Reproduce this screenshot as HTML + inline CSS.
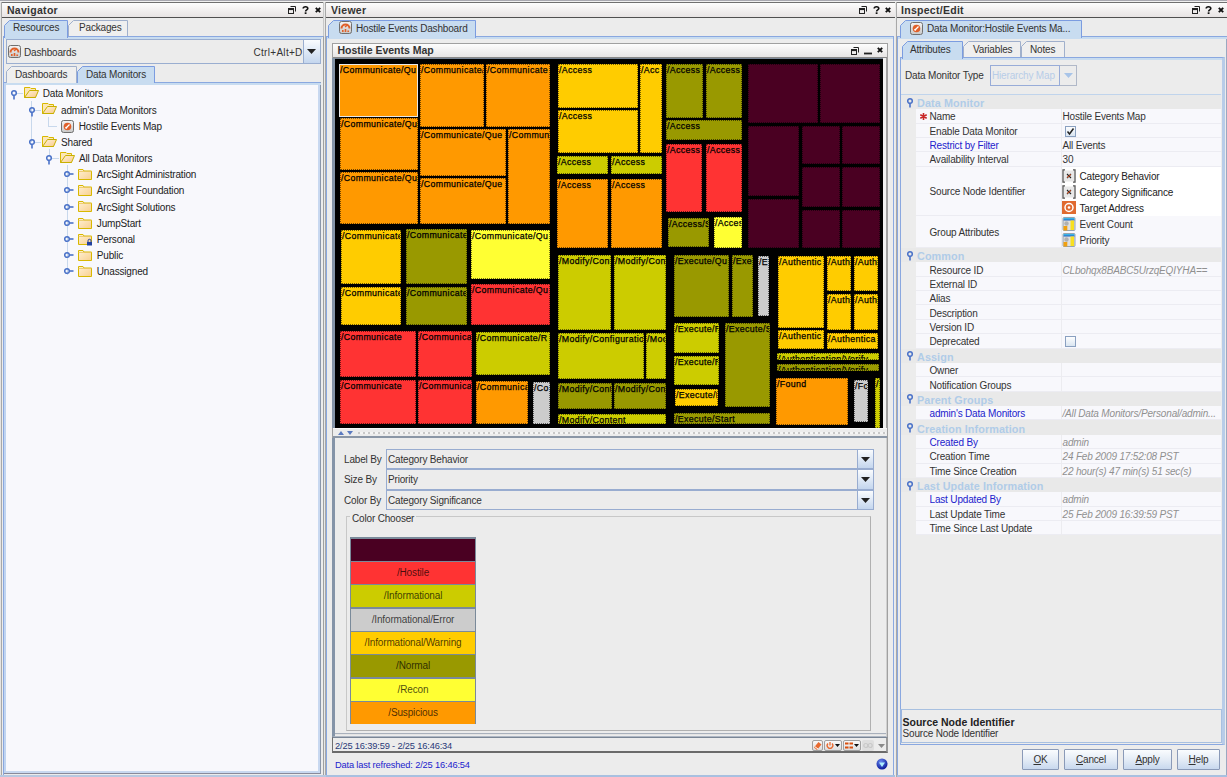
<!DOCTYPE html>
<html><head><meta charset="utf-8"><style>
*{margin:0;padding:0;box-sizing:border-box}
html,body{width:1227px;height:777px;overflow:hidden}
body{position:relative;background:#ececec;font-family:"Liberation Sans",sans-serif;font-size:9.6px;color:#222}
.a{position:absolute}
.t{position:absolute;white-space:nowrap;line-height:12px;font-size:10px;letter-spacing:-0.17px}
.hdr{position:absolute;top:2px;height:16px;background:linear-gradient(#fdfdfd,#f2f0f0 50%,#e8e4e4);border-top:1px solid #707070;border-bottom:1px solid #505050}
.hdr b{position:absolute;left:5px;top:1px;font-size:10.5px;color:#333;line-height:13px;letter-spacing:0.28px}
.tm{position:absolute;left:335px;top:59px;width:548px;height:369px;background:#000;overflow:hidden}
.b{position:absolute;overflow:hidden;white-space:nowrap;font-size:8.8px;line-height:10px;color:#000;letter-spacing:0.35px;padding:0;border:1px dotted rgba(0,0,0,0.55);-webkit-text-stroke:0.25px #000}
.b.sel{border:1px solid #e8e8e8}

</style></head><body>
<div class="a" style="left:0px;top:0px;width:1227px;height:1px;background:#a8a8b0"></div>
<div class="a" style="left:0px;top:1px;width:1227px;height:1px;background:#f0f0f0"></div>
<div class="a" style="left:0px;top:2px;width:2px;height:775px;background:#e4e4e4;border-right:1px solid #a8a8a8"></div>
<div class="hdr" style="left:2px;width:321px"><b>Navigator</b></div>
<div class="hdr" style="left:326px;width:569px"><b>Viewer</b></div>
<div class="hdr" style="left:896px;width:331px"><b>Inspect/Edit</b></div>
<div class="a" style="left:323px;top:2px;width:3px;height:775px;background:#e8e8e8;border-left:1px solid #c8c8c8;border-right:1px solid #a8a8a8"></div>
<div class="a" style="left:895px;top:2px;width:2px;height:775px;background:#e8e8e8;border-right:1px solid #a8a8a8"></div>
<svg class="a" style="left:288px;top:6px" width="8" height="8" viewBox="0 0 8 8"><rect x="0.5" y="2.5" width="5" height="5" fill="none" stroke="#222" stroke-width="1"/><path d="M0.5 3.5H5.5" stroke="#222" stroke-width="1.2"/><path d="M2.5 0.5H7.5V5.5" fill="none" stroke="#222" stroke-width="1"/></svg>
<svg class="a" style="left:302px;top:6px" width="7" height="8" viewBox="0 0 7 8"><path d="M1.2 2.6C1.2 1.2 2.2 0.8 3.5 0.8S5.8 1.4 5.8 2.6C5.8 3.9 3.6 4 3.6 5.4" fill="none" stroke="#111" stroke-width="1.6"/><rect x="2.7" y="6.3" width="1.8" height="1.7" fill="#111"/></svg>
<svg class="a" style="left:315px;top:7px" width="6" height="6" viewBox="0 0 6 6"><path d="M0.8 0.8L5.2 5.2M5.2 0.8L0.8 5.2" stroke="#111" stroke-width="1.9"/></svg>
<svg class="a" style="left:859px;top:6px" width="8" height="8" viewBox="0 0 8 8"><rect x="0.5" y="2.5" width="5" height="5" fill="none" stroke="#222" stroke-width="1"/><path d="M0.5 3.5H5.5" stroke="#222" stroke-width="1.2"/><path d="M2.5 0.5H7.5V5.5" fill="none" stroke="#222" stroke-width="1"/></svg>
<svg class="a" style="left:873px;top:6px" width="7" height="8" viewBox="0 0 7 8"><path d="M1.2 2.6C1.2 1.2 2.2 0.8 3.5 0.8S5.8 1.4 5.8 2.6C5.8 3.9 3.6 4 3.6 5.4" fill="none" stroke="#111" stroke-width="1.6"/><rect x="2.7" y="6.3" width="1.8" height="1.7" fill="#111"/></svg>
<svg class="a" style="left:885px;top:7px" width="6" height="6" viewBox="0 0 6 6"><path d="M0.8 0.8L5.2 5.2M5.2 0.8L0.8 5.2" stroke="#111" stroke-width="1.9"/></svg>
<svg class="a" style="left:1192px;top:6px" width="8" height="8" viewBox="0 0 8 8"><rect x="0.5" y="2.5" width="5" height="5" fill="none" stroke="#222" stroke-width="1"/><path d="M0.5 3.5H5.5" stroke="#222" stroke-width="1.2"/><path d="M2.5 0.5H7.5V5.5" fill="none" stroke="#222" stroke-width="1"/></svg>
<svg class="a" style="left:1205px;top:6px" width="7" height="8" viewBox="0 0 7 8"><path d="M1.2 2.6C1.2 1.2 2.2 0.8 3.5 0.8S5.8 1.4 5.8 2.6C5.8 3.9 3.6 4 3.6 5.4" fill="none" stroke="#111" stroke-width="1.6"/><rect x="2.7" y="6.3" width="1.8" height="1.7" fill="#111"/></svg>
<svg class="a" style="left:1218px;top:7px" width="6" height="6" viewBox="0 0 6 6"><path d="M0.8 0.8L5.2 5.2M5.2 0.8L0.8 5.2" stroke="#111" stroke-width="1.9"/></svg>
<div class="a" style="left:3px;top:36px;width:321px;height:739px;background:#ececec;border:1px solid #8aa8e0;border-right-color:#a0a0a0;border-bottom:none"></div>
<div class="a" style="left:5px;top:37px;width:317px;height:2px;background:#c8dcf0"></div>
<svg class="a" style="left:68px;top:20px" width="60" height="16"><path d="M0.5 16 V5.5 L5.5 0.5 H59.5 V16" fill="#efefef" stroke="#a0b0cc" stroke-width="1"/></svg>

<div class="t" style="left:79px;top:22px;color:#333">Packages</div>
<svg class="a" style="left:4px;top:20px" width="64" height="18"><path d="M0.5 18 V5.5 L5.5 0.5 H63.5 V18" fill="#c8dcf0" stroke="#7b9ce0" stroke-width="1"/></svg>

<div class="t" style="left:13px;top:22px;color:#333">Resources</div>
<div class="a" style="left:6px;top:39px;width:315px;height:25px;background:#ececec;border:1px solid #9aaed0"></div>
<div class="a" style="left:303px;top:40px;width:17px;height:23px;background:linear-gradient(#fafcfe,#c4d6ee);border-left:1px solid #9aaed0"></div>
<svg class="a" style="left:307px;top:49px" width="9" height="5" viewBox="0 0 9 5"><path d="M0 0H9L4.5 5Z" fill="#222"/></svg>
<svg class="a" style="left:8px;top:45px" width="13" height="13" viewBox="0 0 13 13"><defs><linearGradient id="dsg" x1="0" y1="0" x2="0" y2="1"><stop offset="0" stop-color="#f4f4f4"/><stop offset="1" stop-color="#c8c8c8"/></linearGradient></defs><rect x="0.5" y="0.5" width="12" height="12" rx="2" fill="url(#dsg)" stroke="#707070"/><path d="M2.5 7.5A4 4 0 0 1 10.5 7.5" fill="none" stroke="#e0602a" stroke-width="2"/><path d="M6 6L9 3.5" stroke="#e0602a" stroke-width="1.4"/><rect x="3" y="9" width="1.6" height="2" fill="#e0602a"/><rect x="5.7" y="8" width="1.6" height="3" fill="#e0602a"/><rect x="8.4" y="9.5" width="1.6" height="1.5" fill="#e0602a"/></svg>
<div class="t" style="left:24px;top:46.5px;color:#333">Dashboards</div>
<div class="t" style="left:253.5px;top:46.5px;color:#333;letter-spacing:0.3px">Ctrl+Alt+D</div>
<div class="a" style="left:4px;top:82px;width:317px;height:692px;background:#f8f8fc;border-top:1px solid #8aa8e0;border-right:1px solid #8a96aa;border-bottom:1px solid #8a8a9a;box-shadow:inset 2px 0 0 #c0d4f0,inset -2px -2px 0 #c8d8f0"></div>
<svg class="a" style="left:6px;top:66px" width="71" height="17"><path d="M0.5 17 V5.5 L5.5 0.5 H70.5 V17" fill="#efefef" stroke="#a0b0cc" stroke-width="1"/></svg>

<div class="t" style="left:15px;top:69px;color:#333">Dashboards</div>
<svg class="a" style="left:77px;top:66px" width="78" height="18"><path d="M0.5 18 V5.5 L5.5 0.5 H77.5 V18" fill="#c8dcf0" stroke="#7b9ce0" stroke-width="1"/></svg>

<div class="t" style="left:86px;top:69px;color:#333">Data Monitors</div>
<div class="a" style="left:6px;top:83px;width:315px;height:2px;background:#c8dcf0"></div>
<div class="a" style="left:31px;top:101px;width:1px;height:41px;background:#c8d8ec"></div>
<div class="a" style="left:48px;top:117px;width:1px;height:9px;background:#c8d8ec"></div>
<div class="a" style="left:48px;top:126px;width:9px;height:1px;background:#c8d8ec"></div>
<div class="a" style="left:49px;top:149px;width:1px;height:7px;background:#c8d8ec"></div>
<div class="a" style="left:67px;top:165px;width:1px;height:110px;background:#c8d8ec"></div>
<div class="a" style="left:16px;top:93px;width:7px;height:1px;background:#c8d8ec"></div>
<div class="a" style="left:34px;top:110px;width:7px;height:1px;background:#c8d8ec"></div>
<div class="a" style="left:34px;top:142px;width:7px;height:1px;background:#c8d8ec"></div>
<div class="a" style="left:52px;top:158px;width:7px;height:1px;background:#c8d8ec"></div>
<svg class="a" style="left:9.5px;top:89px" width="8" height="11" viewBox="0 0 8 11"><circle cx="4" cy="4" r="2.3" fill="none" stroke="#4a72c8" stroke-width="1.5"/><path d="M4 6.3V10.5" stroke="#4a72c8" stroke-width="1.6"/></svg>
<svg class="a" style="left:24px;top:87px" width="16" height="12" viewBox="0 0 16 12"><defs><linearGradient id="fo" x1="0" y1="0" x2="1" y2="1"><stop offset="0" stop-color="#fff4dc"/><stop offset="1" stop-color="#f8c888"/></linearGradient></defs><path d="M0.5 0.5H6L7 1.5H11.5V10.5H0.5Z" fill="#fce6b8" stroke="#d8b800" stroke-width="1"/><path d="M5.5 3.5H14.5L11.5 10.5H0.5Z" fill="url(#fo)" stroke="#c8b000" stroke-width="1"/></svg>
<div class="t" style="left:42.7px;top:88px;">Data Monitors</div>
<svg class="a" style="left:27.5px;top:105.5px" width="8" height="11" viewBox="0 0 8 11"><circle cx="4" cy="4" r="2.3" fill="none" stroke="#4a72c8" stroke-width="1.5"/><path d="M4 6.3V10.5" stroke="#4a72c8" stroke-width="1.6"/></svg>
<svg class="a" style="left:42px;top:103px" width="16" height="12" viewBox="0 0 16 12"><defs><linearGradient id="fo" x1="0" y1="0" x2="1" y2="1"><stop offset="0" stop-color="#fff4dc"/><stop offset="1" stop-color="#f8c888"/></linearGradient></defs><path d="M0.5 0.5H6L7 1.5H11.5V10.5H0.5Z" fill="#fce6b8" stroke="#d8b800" stroke-width="1"/><path d="M5.5 3.5H14.5L11.5 10.5H0.5Z" fill="url(#fo)" stroke="#c8b000" stroke-width="1"/></svg>
<div class="t" style="left:61px;top:104.5px;">admin's Data Monitors</div>
<svg class="a" style="left:61px;top:119.5px" width="13" height="13" viewBox="0 0 13 13"><defs><linearGradient id="dmg" x1="0" y1="0" x2="0" y2="1"><stop offset="0" stop-color="#f4f4f4"/><stop offset="1" stop-color="#c8c8c8"/></linearGradient></defs><rect x="0.5" y="0.5" width="12" height="12" rx="2" fill="url(#dmg)" stroke="#707070"/><circle cx="6.5" cy="6.5" r="3.8" fill="#e0602a"/><path d="M5 8L8.5 4.5" stroke="#fff" stroke-width="1.3"/><circle cx="5.2" cy="7.8" r="1" fill="#fff"/></svg>
<div class="t" style="left:78.8px;top:121px;">Hostile Events Map</div>
<svg class="a" style="left:27.5px;top:138px" width="8" height="11" viewBox="0 0 8 11"><circle cx="4" cy="4" r="2.3" fill="none" stroke="#4a72c8" stroke-width="1.5"/><path d="M4 6.3V10.5" stroke="#4a72c8" stroke-width="1.6"/></svg>
<svg class="a" style="left:42px;top:136px" width="16" height="12" viewBox="0 0 16 12"><defs><linearGradient id="fo" x1="0" y1="0" x2="1" y2="1"><stop offset="0" stop-color="#fff4dc"/><stop offset="1" stop-color="#f8c888"/></linearGradient></defs><path d="M0.5 0.5H6L7 1.5H11.5V10.5H0.5Z" fill="#fce6b8" stroke="#d8b800" stroke-width="1"/><path d="M5.5 3.5H14.5L11.5 10.5H0.5Z" fill="url(#fo)" stroke="#c8b000" stroke-width="1"/></svg>
<div class="t" style="left:61px;top:137px;">Shared</div>
<svg class="a" style="left:45.3px;top:154px" width="8" height="11" viewBox="0 0 8 11"><circle cx="4" cy="4" r="2.3" fill="none" stroke="#4a72c8" stroke-width="1.5"/><path d="M4 6.3V10.5" stroke="#4a72c8" stroke-width="1.6"/></svg>
<svg class="a" style="left:60px;top:152px" width="16" height="12" viewBox="0 0 16 12"><defs><linearGradient id="fo" x1="0" y1="0" x2="1" y2="1"><stop offset="0" stop-color="#fff4dc"/><stop offset="1" stop-color="#f8c888"/></linearGradient></defs><path d="M0.5 0.5H6L7 1.5H11.5V10.5H0.5Z" fill="#fce6b8" stroke="#d8b800" stroke-width="1"/><path d="M5.5 3.5H14.5L11.5 10.5H0.5Z" fill="url(#fo)" stroke="#c8b000" stroke-width="1"/></svg>
<div class="t" style="left:79px;top:153px;">All Data Monitors</div>
<svg class="a" style="left:63.3px;top:170px" width="11" height="8" viewBox="0 0 11 8"><circle cx="4" cy="4" r="2.3" fill="none" stroke="#4a72c8" stroke-width="1.5"/><path d="M6.3 4H10.5" stroke="#4a72c8" stroke-width="1.6"/></svg>
<svg class="a" style="left:78px;top:168.5px" width="15" height="12" viewBox="0 0 15 12"><defs><linearGradient id="fc" x1="0" y1="0" x2="1" y2="1"><stop offset="0" stop-color="#fff0d4"/><stop offset="1" stop-color="#f8d090"/></linearGradient></defs><path d="M0.5 0.5H5L6 2H13.5V10.5H0.5Z" fill="url(#fc)" stroke="#d8b800" stroke-width="1"/><path d="M0.5 2.5H13.5" stroke="#e8c860" stroke-width="0.8"/></svg>
<div class="t" style="left:96.8px;top:169px;">ArcSight Administration</div>
<svg class="a" style="left:63.3px;top:186px" width="11" height="8" viewBox="0 0 11 8"><circle cx="4" cy="4" r="2.3" fill="none" stroke="#4a72c8" stroke-width="1.5"/><path d="M6.3 4H10.5" stroke="#4a72c8" stroke-width="1.6"/></svg>
<svg class="a" style="left:78px;top:184.5px" width="15" height="12" viewBox="0 0 15 12"><defs><linearGradient id="fc" x1="0" y1="0" x2="1" y2="1"><stop offset="0" stop-color="#fff0d4"/><stop offset="1" stop-color="#f8d090"/></linearGradient></defs><path d="M0.5 0.5H5L6 2H13.5V10.5H0.5Z" fill="url(#fc)" stroke="#d8b800" stroke-width="1"/><path d="M0.5 2.5H13.5" stroke="#e8c860" stroke-width="0.8"/></svg>
<div class="t" style="left:96.8px;top:185px;">ArcSight Foundation</div>
<svg class="a" style="left:63.3px;top:202.5px" width="11" height="8" viewBox="0 0 11 8"><circle cx="4" cy="4" r="2.3" fill="none" stroke="#4a72c8" stroke-width="1.5"/><path d="M6.3 4H10.5" stroke="#4a72c8" stroke-width="1.6"/></svg>
<svg class="a" style="left:78px;top:201.0px" width="15" height="12" viewBox="0 0 15 12"><defs><linearGradient id="fc" x1="0" y1="0" x2="1" y2="1"><stop offset="0" stop-color="#fff0d4"/><stop offset="1" stop-color="#f8d090"/></linearGradient></defs><path d="M0.5 0.5H5L6 2H13.5V10.5H0.5Z" fill="url(#fc)" stroke="#d8b800" stroke-width="1"/><path d="M0.5 2.5H13.5" stroke="#e8c860" stroke-width="0.8"/></svg>
<div class="t" style="left:96.8px;top:201.5px;">ArcSight Solutions</div>
<svg class="a" style="left:63.3px;top:219px" width="11" height="8" viewBox="0 0 11 8"><circle cx="4" cy="4" r="2.3" fill="none" stroke="#4a72c8" stroke-width="1.5"/><path d="M6.3 4H10.5" stroke="#4a72c8" stroke-width="1.6"/></svg>
<svg class="a" style="left:78px;top:217.5px" width="15" height="12" viewBox="0 0 15 12"><defs><linearGradient id="fc" x1="0" y1="0" x2="1" y2="1"><stop offset="0" stop-color="#fff0d4"/><stop offset="1" stop-color="#f8d090"/></linearGradient></defs><path d="M0.5 0.5H5L6 2H13.5V10.5H0.5Z" fill="url(#fc)" stroke="#d8b800" stroke-width="1"/><path d="M0.5 2.5H13.5" stroke="#e8c860" stroke-width="0.8"/></svg>
<div class="t" style="left:96.8px;top:218px;">JumpStart</div>
<svg class="a" style="left:63.3px;top:235px" width="11" height="8" viewBox="0 0 11 8"><circle cx="4" cy="4" r="2.3" fill="none" stroke="#4a72c8" stroke-width="1.5"/><path d="M6.3 4H10.5" stroke="#4a72c8" stroke-width="1.6"/></svg>
<svg class="a" style="left:78px;top:233.5px" width="15" height="12" viewBox="0 0 15 12"><defs><linearGradient id="fc" x1="0" y1="0" x2="1" y2="1"><stop offset="0" stop-color="#fff0d4"/><stop offset="1" stop-color="#f8d090"/></linearGradient></defs><path d="M0.5 0.5H5L6 2H13.5V10.5H0.5Z" fill="url(#fc)" stroke="#d8b800" stroke-width="1"/><path d="M0.5 2.5H13.5" stroke="#e8c860" stroke-width="0.8"/><rect x="9" y="8" width="5" height="3.5" fill="#2040a0"/><path d="M10 8V6.8a1.5 1.5 0 0 1 3 0V8" fill="none" stroke="#2040a0" stroke-width="1"/></svg>
<div class="t" style="left:96.8px;top:234px;">Personal</div>
<svg class="a" style="left:63.3px;top:251px" width="11" height="8" viewBox="0 0 11 8"><circle cx="4" cy="4" r="2.3" fill="none" stroke="#4a72c8" stroke-width="1.5"/><path d="M6.3 4H10.5" stroke="#4a72c8" stroke-width="1.6"/></svg>
<svg class="a" style="left:78px;top:249.5px" width="15" height="12" viewBox="0 0 15 12"><defs><linearGradient id="fc" x1="0" y1="0" x2="1" y2="1"><stop offset="0" stop-color="#fff0d4"/><stop offset="1" stop-color="#f8d090"/></linearGradient></defs><path d="M0.5 0.5H5L6 2H13.5V10.5H0.5Z" fill="url(#fc)" stroke="#d8b800" stroke-width="1"/><path d="M0.5 2.5H13.5" stroke="#e8c860" stroke-width="0.8"/></svg>
<div class="t" style="left:96.8px;top:250px;">Public</div>
<svg class="a" style="left:63.3px;top:267px" width="11" height="8" viewBox="0 0 11 8"><circle cx="4" cy="4" r="2.3" fill="none" stroke="#4a72c8" stroke-width="1.5"/><path d="M6.3 4H10.5" stroke="#4a72c8" stroke-width="1.6"/></svg>
<svg class="a" style="left:78px;top:265.5px" width="15" height="12" viewBox="0 0 15 12"><defs><linearGradient id="fc" x1="0" y1="0" x2="1" y2="1"><stop offset="0" stop-color="#fff0d4"/><stop offset="1" stop-color="#f8d090"/></linearGradient></defs><path d="M0.5 0.5H5L6 2H13.5V10.5H0.5Z" fill="url(#fc)" stroke="#d8b800" stroke-width="1"/><path d="M0.5 2.5H13.5" stroke="#e8c860" stroke-width="0.8"/></svg>
<div class="t" style="left:96.8px;top:266px;">Unassigned</div>
<div class="a" style="left:326px;top:36px;width:568px;height:740px;background:#ececec;border:1px solid #8aa8e0"></div>
<div class="a" style="left:327px;top:37px;width:566px;height:2px;background:#c8dcf0"></div>
<svg class="a" style="left:328px;top:20px" width="148" height="18"><path d="M0.5 18 V5.5 L5.5 0.5 H147.5 V18" fill="#c8dcf0" stroke="#7b9ce0" stroke-width="1"/></svg>
<svg class="a" style="left:339px;top:21px" width="13" height="13" viewBox="0 0 13 13"><defs><linearGradient id="dsg" x1="0" y1="0" x2="0" y2="1"><stop offset="0" stop-color="#f4f4f4"/><stop offset="1" stop-color="#c8c8c8"/></linearGradient></defs><rect x="0.5" y="0.5" width="12" height="12" rx="2" fill="url(#dsg)" stroke="#707070"/><path d="M2.5 7.5A4 4 0 0 1 10.5 7.5" fill="none" stroke="#e0602a" stroke-width="2"/><path d="M6 6L9 3.5" stroke="#e0602a" stroke-width="1.4"/><rect x="3" y="9" width="1.6" height="2" fill="#e0602a"/><rect x="5.7" y="8" width="1.6" height="3" fill="#e0602a"/><rect x="8.4" y="9.5" width="1.6" height="1.5" fill="#e0602a"/></svg>
<div class="t" style="left:356px;top:22.5px;color:#333">Hostile Events Dashboard</div>
<div class="a" style="left:332px;top:43px;width:556px;height:694px;background:#ececec;border:1px solid #a0a0a0"></div>
<div class="a" style="left:333px;top:44px;width:554px;height:14px;background:linear-gradient(#fdfdfd,#e6e4e4);border-bottom:1px solid #888"></div>
<div class="t" style="left:337.5px;top:44px;font-weight:bold;font-size:10.5px;line-height:13px;color:#333;letter-spacing:0px">Hostile Events Map</div>
<svg class="a" style="left:851px;top:47px" width="8" height="8" viewBox="0 0 8 8"><rect x="0.5" y="2.5" width="5" height="5" fill="none" stroke="#222" stroke-width="1"/><path d="M0.5 3.5H5.5" stroke="#222" stroke-width="1.2"/><path d="M2.5 0.5H7.5V5.5" fill="none" stroke="#222" stroke-width="1"/></svg>
<svg class="a" style="left:864px;top:47px" width="8" height="8" viewBox="0 0 8 8"><path d="M0 6.5H8" stroke="#222" stroke-width="1.8"/></svg>
<svg class="a" style="left:877px;top:47px" width="6" height="6" viewBox="0 0 6 6"><path d="M0.8 0.8L5.2 5.2M5.2 0.8L0.8 5.2" stroke="#111" stroke-width="1.9"/></svg>
<div class="a" style="left:333px;top:58px;width:554px;height:1px;background:#7a8696"></div>
<div class="a" style="left:332px;top:58px;width:3px;height:370px;background:#8494a8"></div>
<div class="a" style="left:883px;top:58px;width:4px;height:370px;background:#f0f0f0;border-right:1px solid #a0a0a0"></div>
<div class="tm"><div class="b sel" style="left:4px;top:5px;width:79px;height:53px;background:#FF9900">/Communicate/Qu</div>
<div class="b" style="left:85px;top:5px;width:64px;height:63px;background:#FF9900">/Communicate/Q</div>
<div class="b" style="left:151px;top:5px;width:64px;height:63px;background:#FF9900">/Communicate</div>
<div class="b" style="left:5px;top:59px;width:78px;height:52px;background:#FF9900">/Communicate/Qu</div>
<div class="b" style="left:5px;top:113px;width:78px;height:52px;background:#FF9900">/Communicate/Qu</div>
<div class="b" style="left:85px;top:70px;width:86px;height:47px;background:#FF9900">/Communicate/Que</div>
<div class="b" style="left:85px;top:119px;width:86px;height:46px;background:#FF9900">/Communicate/Que</div>
<div class="b" style="left:173px;top:70px;width:42px;height:95px;background:#FF9900">/Commun</div>
<div class="b" style="left:6px;top:171px;width:60px;height:54px;background:#FFCC00">/Communicate</div>
<div class="b" style="left:6px;top:228px;width:60px;height:38px;background:#FFCC00">/Communicate</div>
<div class="b" style="left:71px;top:170px;width:61px;height:55px;background:#999900">/Communicate</div>
<div class="b" style="left:71px;top:228px;width:61px;height:38px;background:#999900">/Communicate</div>
<div class="b" style="left:136px;top:171px;width:79px;height:49px;background:#FFFF33">/Communicate/Qu</div>
<div class="b" style="left:136px;top:225px;width:79px;height:41px;background:#FF3333">/Communicate/Qu</div>
<div class="b" style="left:5px;top:272px;width:76px;height:46px;background:#FF3333">/Communicate</div>
<div class="b" style="left:83px;top:272px;width:54px;height:46px;background:#FF3333">/Communica</div>
<div class="b" style="left:141px;top:273px;width:74px;height:43px;background:#CCCC00">/Communicate/R</div>
<div class="b" style="left:5px;top:321px;width:76px;height:44px;background:#FF3333">/Communicate</div>
<div class="b" style="left:83px;top:321px;width:54px;height:44px;background:#FF3333">/Communica</div>
<div class="b" style="left:141px;top:322px;width:52px;height:43px;background:#FF9900">/Communica</div>
<div class="b" style="left:198px;top:323px;width:17px;height:42px;background:#CCCCCC">/Co</div>
<div class="b" style="left:223px;top:5px;width:80px;height:44px;background:#FFCC00">/Access</div>
<div class="b" style="left:223px;top:51px;width:80px;height:43px;background:#FFCC00">/Access</div>
<div class="b" style="left:305px;top:5px;width:22px;height:89px;background:#FFCC00">/Acc</div>
<div class="b" style="left:222px;top:97px;width:51px;height:18px;background:#CCCC00">/Access</div>
<div class="b" style="left:276px;top:97px;width:51px;height:18px;background:#CCCC00">/Access</div>
<div class="b" style="left:222px;top:120px;width:51px;height:69px;background:#FF9900">/Access</div>
<div class="b" style="left:276px;top:120px;width:51px;height:69px;background:#FF9900">/Access</div>
<div class="b" style="left:331px;top:5px;width:37px;height:54px;background:#999900">/Access</div>
<div class="b" style="left:371px;top:5px;width:36px;height:54px;background:#999900">/Access</div>
<div class="b" style="left:331px;top:61px;width:76px;height:20px;background:#999900">/Access</div>
<div class="b" style="left:331px;top:85px;width:36px;height:68px;background:#FF3333">/Access</div>
<div class="b" style="left:371px;top:85px;width:36px;height:68px;background:#FF3333">/Access</div>
<div class="b" style="left:333px;top:159px;width:41px;height:29px;background:#999900">/Access/S</div>
<div class="b" style="left:379px;top:158px;width:28px;height:31px;background:#FFFF33">/Acces</div>
<div class="b" style="left:413px;top:5px;width:70px;height:59px;background:#4A0022"></div>
<div class="b" style="left:485px;top:5px;width:60px;height:59px;background:#4A0022"></div>
<div class="b" style="left:413px;top:67px;width:51px;height:70px;background:#4A0022"></div>
<div class="b" style="left:413px;top:140px;width:51px;height:49px;background:#4A0022"></div>
<div class="b" style="left:467px;top:67px;width:38px;height:38px;background:#4A0022"></div>
<div class="b" style="left:507px;top:67px;width:38px;height:38px;background:#4A0022"></div>
<div class="b" style="left:467px;top:108px;width:38px;height:40px;background:#4A0022"></div>
<div class="b" style="left:507px;top:108px;width:38px;height:40px;background:#4A0022"></div>
<div class="b" style="left:467px;top:151px;width:38px;height:38px;background:#4A0022"></div>
<div class="b" style="left:507px;top:151px;width:38px;height:38px;background:#4A0022"></div>
<div class="b" style="left:223px;top:196px;width:53px;height:75px;background:#CCCC00">/Modify/Cont</div>
<div class="b" style="left:279px;top:196px;width:52px;height:75px;background:#CCCC00">/Modify/Cont</div>
<div class="b" style="left:223px;top:274px;width:86px;height:46px;background:#CCCC00">/Modify/Configuratio</div>
<div class="b" style="left:311px;top:274px;width:20px;height:46px;background:#CCCC00">/Moc</div>
<div class="b" style="left:223px;top:324px;width:54px;height:26px;background:#999900">/Modify/Cont</div>
<div class="b" style="left:279px;top:324px;width:52px;height:26px;background:#999900">/Modify/Con</div>
<div class="b" style="left:223px;top:355px;width:108px;height:10px;background:#CCCC00">/Modify/Content</div>
<div class="b" style="left:339px;top:196px;width:55px;height:62px;background:#999900">/Execute/Qu</div>
<div class="b" style="left:397px;top:196px;width:21px;height:62px;background:#999900">/Exec</div>
<div class="b" style="left:423px;top:197px;width:11px;height:60px;background:#CCCCCC">/E</div>
<div class="b" style="left:339px;top:264px;width:45px;height:30px;background:#CCCC00">/Execute/R</div>
<div class="b" style="left:339px;top:297px;width:45px;height:29px;background:#CCCC00">/Execute/R</div>
<div class="b" style="left:340px;top:330px;width:43px;height:17px;background:#FFCC00">/Execute/R</div>
<div class="b" style="left:390px;top:264px;width:45px;height:84px;background:#999900">/Execute/S</div>
<div class="b" style="left:339px;top:354px;width:96px;height:11px;background:#999900">/Execute/Start</div>
<div class="b" style="left:443px;top:197px;width:46px;height:72px;background:#FFCC00">/Authentic</div>
<div class="b" style="left:492px;top:197px;width:24px;height:35px;background:#FFCC00">/Auth</div>
<div class="b" style="left:519px;top:197px;width:24px;height:35px;background:#FFCC00">/Auth</div>
<div class="b" style="left:492px;top:235px;width:24px;height:36px;background:#FFCC00">/Auth</div>
<div class="b" style="left:519px;top:235px;width:24px;height:36px;background:#FFCC00">/Auth</div>
<div class="b" style="left:443px;top:271px;width:46px;height:19px;background:#FFCC00">/Authentic</div>
<div class="b" style="left:492px;top:274px;width:51px;height:16px;background:#FFCC00">/Authentica</div>
<div class="b" style="left:442px;top:294px;width:102px;height:7px;background:#CCCC00">/Authentication/Verify</div>
<div class="b" style="left:442px;top:305px;width:102px;height:7px;background:#999900">/Authentication/Verify</div>
<div class="b" style="left:441px;top:319px;width:72px;height:47px;background:#FF9900">/Found</div>
<div class="b" style="left:519px;top:321px;width:14px;height:42px;background:#CCCCCC">/Fo</div>
<div class="b" style="left:540px;top:319px;width:5px;height:50px;background:#CCCC00">/</div></div>
<div class="a" style="left:333px;top:428px;width:554px;height:10px;background:#ececec;border-top:1px solid #f8f8f8;border-bottom:2px solid #8a96a6"></div>
<div class="a" style="left:358px;top:432px;width:528px;height:2px;background:repeating-linear-gradient(90deg,#c8c8c8 0 2px,#f4f4f4 2px 5px)"></div>
<svg class="a" style="left:338px;top:430px" width="18" height="6" viewBox="0 0 18 6"><path d="M0 5H6L3 1Z" fill="#5a7ac0"/><path d="M9 1H15L12 5Z" fill="#5a7ac0"/></svg>
<div class="a" style="left:332px;top:438px;width:555px;height:299px;background:#ececec;border-left:3px solid #8494a8;border-bottom:1px solid #b0b8c4;border-right:1px solid #d0d0d0"></div>
<div class="a" style="left:335px;top:733px;width:551px;height:2px;background:#e4e4e4;border-top:1px solid #a8b0bc"></div>
<div class="t" style="left:344px;top:453.5px;color:#333">Label By</div>
<div class="a" style="left:386px;top:449px;width:488px;height:20px;background:#ececec;border:1px solid #98acd0"></div>
<div class="a" style="left:857px;top:450px;width:16px;height:18px;background:linear-gradient(#fafcfe,#c4d6ee);border-left:1px solid #98acd0"></div>
<svg class="a" style="left:861px;top:456.5px" width="9" height="5" viewBox="0 0 9 5"><path d="M0 0H9L4.5 5Z" fill="#222"/></svg>
<div class="t" style="left:388px;top:453.5px;color:#333">Category Behavior</div>
<div class="t" style="left:344px;top:474.0px;color:#333">Size By</div>
<div class="a" style="left:386px;top:469px;width:488px;height:21px;background:#ececec;border:1px solid #98acd0"></div>
<div class="a" style="left:857px;top:470px;width:16px;height:19px;background:linear-gradient(#fafcfe,#c4d6ee);border-left:1px solid #98acd0"></div>
<svg class="a" style="left:861px;top:477.0px" width="9" height="5" viewBox="0 0 9 5"><path d="M0 0H9L4.5 5Z" fill="#222"/></svg>
<div class="t" style="left:388px;top:474.0px;color:#333">Priority</div>
<div class="t" style="left:344px;top:494.5px;color:#333">Color By</div>
<div class="a" style="left:386px;top:490px;width:488px;height:20px;background:#ececec;border:1px solid #98acd0"></div>
<div class="a" style="left:857px;top:491px;width:16px;height:18px;background:linear-gradient(#fafcfe,#c4d6ee);border-left:1px solid #98acd0"></div>
<svg class="a" style="left:861px;top:497.5px" width="9" height="5" viewBox="0 0 9 5"><path d="M0 0H9L4.5 5Z" fill="#222"/></svg>
<div class="t" style="left:388px;top:494.5px;color:#333">Category Significance</div>
<div class="a" style="left:346px;top:516px;width:525px;height:215px;border:1px solid #c8c8c8;border-right-color:#b0b0b0;border-bottom-color:#b0b0b0"></div>
<div class="t" style="left:350px;top:512.5px;padding:0 2px;background:#ececec;color:#333">Color Chooser</div>
<div class="a" style="left:350px;top:537px;width:126px;height:187px;background:#7a8a9a"></div>
<div class="a" style="left:351px;top:539px;width:124px;height:22px;background:#4A0022;text-align:center;line-height:22px;color:rgba(0,0,0,0.72);font-size:10px;letter-spacing:-0.15px"></div>
<div class="a" style="left:351px;top:562px;width:124px;height:22px;background:#FF3333;text-align:center;line-height:22px;color:rgba(0,0,0,0.72);font-size:10px;letter-spacing:-0.15px">/Hostile</div>
<div class="a" style="left:351px;top:585px;width:124px;height:22px;background:#CCCC00;text-align:center;line-height:22px;color:rgba(0,0,0,0.72);font-size:10px;letter-spacing:-0.15px">/Informational</div>
<div class="a" style="left:351px;top:609px;width:124px;height:22px;background:#CCCCCC;text-align:center;line-height:22px;color:rgba(0,0,0,0.72);font-size:10px;letter-spacing:-0.15px">/Informational/Error</div>
<div class="a" style="left:351px;top:632px;width:124px;height:22px;background:#FFCC00;text-align:center;line-height:22px;color:rgba(0,0,0,0.72);font-size:10px;letter-spacing:-0.15px">/Informational/Warning</div>
<div class="a" style="left:351px;top:655px;width:124px;height:22px;background:#999900;text-align:center;line-height:22px;color:rgba(0,0,0,0.72);font-size:10px;letter-spacing:-0.15px">/Normal</div>
<div class="a" style="left:351px;top:679px;width:124px;height:22px;background:#FFFF33;text-align:center;line-height:22px;color:rgba(0,0,0,0.72);font-size:10px;letter-spacing:-0.15px">/Recon</div>
<div class="a" style="left:351px;top:702px;width:124px;height:22px;background:#FF9900;text-align:center;line-height:22px;color:rgba(0,0,0,0.72);font-size:10px;letter-spacing:-0.15px">/Suspicious</div>
<div class="a" style="left:332px;top:737px;width:556px;height:16px;background:#ececec;border-top:1px solid #7a8696;border-left:1px solid #707070;border-bottom:2px solid #6a6a6a;border-right:2px solid #9a9a9a"></div>
<div class="t" style="left:335px;top:739.5px;color:#2a3a78;font-size:9.3px">2/25 16:39:59 - 2/25 16:46:34</div>
<div class="t" style="left:335px;top:758.5px;color:#2222cc;font-size:9.3px">Data last refreshed: 2/25 16:46:54</div>
<svg class="a" style="left:812px;top:740px" width="11" height="11" viewBox="0 0 11 11"><defs><linearGradient id="tbg" x1="0" y1="0" x2="0" y2="1"><stop offset="0" stop-color="#fafafa"/><stop offset="1" stop-color="#dcdcdc"/></linearGradient></defs><rect x="0.5" y="0.5" width="10" height="10" rx="1.5" fill="url(#tbg)" stroke="#a0a0a0"/><path d="M2 7.5L6.5 2L9.5 4.5L5 10Z" fill="#e86a30"/><path d="M3 6.8L6 9" stroke="#fff" stroke-width="1"/></svg>
<svg class="a" style="left:824px;top:740px" width="18" height="11" viewBox="0 0 18 11"><defs><linearGradient id="tbg" x1="0" y1="0" x2="0" y2="1"><stop offset="0" stop-color="#fafafa"/><stop offset="1" stop-color="#dcdcdc"/></linearGradient></defs><rect x="0.5" y="0.5" width="17" height="10" rx="1.5" fill="url(#tbg)" stroke="#a0a0a0"/><path d="M4 3.5A2.8 2.8 0 1 0 8 3.5" fill="none" stroke="#e86a30" stroke-width="1.3"/><path d="M6 2V5.5" stroke="#e86a30" stroke-width="1.3"/><path d="M11 4H16L13.5 7Z" fill="#111"/></svg>
<svg class="a" style="left:843px;top:740px" width="18" height="11" viewBox="0 0 18 11"><defs><linearGradient id="tbg" x1="0" y1="0" x2="0" y2="1"><stop offset="0" stop-color="#fafafa"/><stop offset="1" stop-color="#dcdcdc"/></linearGradient></defs><rect x="0.5" y="0.5" width="17" height="10" rx="1.5" fill="url(#tbg)" stroke="#a0a0a0"/><rect x="2" y="2.5" width="3.5" height="2" fill="#d85010"/><rect x="6.5" y="2.5" width="3.5" height="2" fill="#d85010"/><rect x="2" y="6.5" width="3.5" height="2" fill="#d85010"/><rect x="6.5" y="6.5" width="3.5" height="2" fill="#d85010"/><path d="M11 4H16L13.5 7Z" fill="#111"/></svg>
<svg class="a" style="left:862px;top:740px" width="12" height="11" viewBox="0 0 12 11"><rect x="0" y="0" width="12" height="11" rx="2" fill="#dedede"/><circle cx="3.8" cy="5.5" r="2" fill="none" stroke="#c8c8c8" stroke-width="1.2"/><circle cx="8.2" cy="5.5" r="2" fill="none" stroke="#c8c8c8" stroke-width="1.2"/></svg>
<svg class="a" style="left:878px;top:744px" width="7" height="4" viewBox="0 0 7 4"><path d="M0 0H7L3.5 4Z" fill="#8a8a8a"/></svg>
<svg class="a" style="left:876px;top:758px" width="12" height="12" viewBox="0 0 12 12"><defs><radialGradient id="bc" cx="0.4" cy="0.3" r="0.7"><stop offset="0" stop-color="#6a8af0"/><stop offset="1" stop-color="#0a1a9a"/></radialGradient></defs><circle cx="6" cy="6" r="5.5" fill="url(#bc)"/><path d="M3 4.5H9L6 9Z" fill="#aef0ff"/></svg>
<div class="a" style="left:897px;top:36px;width:330px;height:740px;background:#ececec;border:1px solid #8aa8e0;border-right:1px solid #9aa8c0"></div>
<div class="a" style="left:898px;top:37px;width:329px;height:2px;background:#c8dcf0"></div>
<svg class="a" style="left:900px;top:20px" width="182" height="18"><path d="M0.5 18 V5.5 L5.5 0.5 H181.5 V18" fill="#c8dcf0" stroke="#7b9ce0" stroke-width="1"/></svg>
<svg class="a" style="left:910px;top:22px" width="13" height="13" viewBox="0 0 13 13"><defs><linearGradient id="dmg" x1="0" y1="0" x2="0" y2="1"><stop offset="0" stop-color="#f4f4f4"/><stop offset="1" stop-color="#c8c8c8"/></linearGradient></defs><rect x="0.5" y="0.5" width="12" height="12" rx="2" fill="url(#dmg)" stroke="#707070"/><circle cx="6.5" cy="6.5" r="3.8" fill="#e0602a"/><path d="M5 8L8.5 4.5" stroke="#fff" stroke-width="1.3"/><circle cx="5.2" cy="7.8" r="1" fill="#fff"/></svg>
<div class="t" style="left:927px;top:22.5px;color:#333">Data Monitor:Hostile Events Ma...</div>
<div class="a" style="left:900px;top:57px;width:325px;height:688px;background:#ececec;border:1px solid #8aa8e0;border-right:3px solid #b8cce8"></div>
<div class="a" style="left:901px;top:58px;width:321px;height:2px;background:#c8dcf0"></div>
<svg class="a" style="left:1021px;top:41px" width="44" height="16"><path d="M0.5 16 V5.5 L5.5 0.5 H43.5 V16" fill="#efefef" stroke="#a0b0cc" stroke-width="1"/></svg>

<div class="t" style="left:1030px;top:43.5px;color:#333">Notes</div>
<svg class="a" style="left:963px;top:41px" width="58" height="16"><path d="M0.5 16 V5.5 L5.5 0.5 H57.5 V16" fill="#efefef" stroke="#a0b0cc" stroke-width="1"/></svg>

<div class="t" style="left:973px;top:43.5px;color:#333">Variables</div>
<svg class="a" style="left:902px;top:41px" width="61" height="18"><path d="M0.5 18 V5.5 L5.5 0.5 H60.5 V18" fill="#c8dcf0" stroke="#7b9ce0" stroke-width="1"/></svg>

<div class="t" style="left:910px;top:43.5px;color:#333">Attributes</div>
<div class="t" style="left:905px;top:70px;color:#333">Data Monitor Type</div>
<div class="a" style="left:990px;top:65px;width:87px;height:21px;background:#ececec;border:1px solid #b0b8c8"></div>
<div class="a" style="left:990px;top:65px;width:70px;height:21px;border:1px solid #98acd8"></div>
<div class="t" style="left:992px;top:69.7px;color:#b8cce8">Hierarchy Map</div>
<svg class="a" style="left:1064px;top:73px" width="9" height="5" viewBox="0 0 9 5"><path d="M0 0H9L4.5 5Z" fill="#a8c4e8"/></svg>
<div class="a" style="left:901px;top:94px;width:320px;height:443px;background:#ececec;border-top:1px solid #c0d4ec"></div>
<div class="a" style="left:901px;top:95px;width:320px;height:14px;background:#e9e9e9"></div>
<svg class="a" style="left:905.5px;top:96.55px" width="8" height="11" viewBox="0 0 8 11"><circle cx="4" cy="4" r="2.3" fill="none" stroke="#4a72c8" stroke-width="1.5"/><path d="M4 6.3V10.5" stroke="#4a72c8" stroke-width="1.6"/></svg>
<div class="t" style="left:917px;top:97.05px;color:#b0cce8;font-weight:bold;font-size:10.8px;letter-spacing:0.1px">Data Monitor</div>
<div class="a" style="left:916px;top:109px;width:305px;height:15px;background:#f8f8fc;border-bottom:1px solid #ececf2"></div>
<div class="a" style="left:1061px;top:109px;width:1px;height:15px;background:#ececf0"></div>
<div class="t" style="left:929.5px;top:111.3px;color:#333">Name</div>
<div class="t" style="left:1062.5px;top:111.3px;color:#333;">Hostile Events Map</div>
<div class="a" style="left:916px;top:124px;width:305px;height:14px;background:#f8f8fc;border-bottom:1px solid #ececf2"></div>
<div class="a" style="left:1061px;top:124px;width:1px;height:14px;background:#ececf0"></div>
<div class="t" style="left:929.5px;top:125.69999999999999px;color:#333">Enable Data Monitor</div>
<svg class="a" style="left:1065px;top:125.69999999999999px" width="11" height="11" viewBox="0 0 11 11"><defs><linearGradient id="cg" x1="0" y1="0" x2="0" y2="1"><stop offset="0" stop-color="#fff"/><stop offset="1" stop-color="#d8e4f0"/></linearGradient></defs><rect x="0.5" y="0.5" width="10" height="10" fill="url(#cg)" stroke="#8aa0c0"/><path d="M2.5 5.5L4.5 8L8.5 2.5" fill="none" stroke="#222" stroke-width="1.5"/></svg>
<div class="a" style="left:916px;top:138px;width:305px;height:14px;background:#f8f8fc;border-bottom:1px solid #ececf2"></div>
<div class="a" style="left:1061px;top:138px;width:1px;height:14px;background:#ececf0"></div>
<div class="t" style="left:929.5px;top:140.05px;color:#2222cc">Restrict by Filter</div>
<div class="t" style="left:1062.5px;top:140.05px;color:#333;">All Events</div>
<div class="a" style="left:916px;top:152px;width:305px;height:15px;background:#f8f8fc;border-bottom:1px solid #ececf2"></div>
<div class="a" style="left:1061px;top:152px;width:1px;height:15px;background:#ececf0"></div>
<div class="t" style="left:929.5px;top:154.39999999999998px;color:#333">Availability Interval</div>
<div class="t" style="left:1062.5px;top:154.39999999999998px;color:#333;">30</div>
<div class="a" style="left:916px;top:167px;width:305px;height:49px;background:#f8f8fc;border-bottom:1px solid #ececf2"></div>
<div class="a" style="left:1061px;top:167px;width:1px;height:49px;background:#ececf0"></div>
<div class="t" style="left:929.5px;top:186.05px;color:#333">Source Node Identifier</div>
<div class="a" style="left:1062px;top:167px;width:159px;height:49px;background:#fff"></div>
<svg class="a" style="left:1062px;top:169px" width="14" height="14" viewBox="0 0 14 14"><rect x="2" y="1.5" width="10" height="11" fill="#e8e8e8"/><path d="M3 0.8H1V13.2H3M11 0.8H13V13.2H11" fill="none" stroke="#555" stroke-width="1.3"/><path d="M5 5L9 9M9 5L5 9" stroke="#222" stroke-width="1.1"/><path d="M5 8.5L9 5.5" stroke="#e05020" stroke-width="1"/></svg>
<div class="t" style="left:1079.5px;top:171px;color:#222">Category Behavior</div>
<svg class="a" style="left:1062px;top:185px" width="14" height="14" viewBox="0 0 14 14"><rect x="2" y="1.5" width="10" height="11" fill="#e8e8e8"/><path d="M3 0.8H1V13.2H3M11 0.8H13V13.2H11" fill="none" stroke="#555" stroke-width="1.3"/><path d="M5 5L9 9M9 5L5 9" stroke="#222" stroke-width="1.1"/><path d="M5 8.5L9 5.5" stroke="#e05020" stroke-width="1"/></svg>
<div class="t" style="left:1079.5px;top:187px;color:#222">Category Significance</div>
<svg class="a" style="left:1062px;top:201px" width="14" height="13" viewBox="0 0 14 13"><rect x="0" y="0" width="14" height="13" fill="#e06a30"/><circle cx="7" cy="6.5" r="4" fill="none" stroke="#fff" stroke-width="1.5"/><circle cx="7" cy="6.5" r="1.3" fill="#fff"/></svg>
<div class="t" style="left:1079.5px;top:203px;color:#222">Target Address</div>
<div class="a" style="left:916px;top:216px;width:305px;height:32px;background:#f8f8fc;border-bottom:1px solid #ececf2"></div>
<div class="a" style="left:1061px;top:216px;width:1px;height:32px;background:#ececf0"></div>
<div class="t" style="left:929.5px;top:226.75px;color:#333">Group Attributes</div>
<svg class="a" style="left:1062px;top:217px" width="14" height="14" viewBox="0 0 14 14"><defs><linearGradient id="gb" x1="0" y1="0" x2="0" y2="1"><stop offset="0" stop-color="#40c8f0"/><stop offset="1" stop-color="#2060c0"/></linearGradient></defs><rect x="1" y="0.5" width="12" height="13" rx="1" fill="#e0e0e0" stroke="#8090a0" stroke-width="0.8"/><rect x="1.5" y="1" width="11" height="2.5" fill="url(#gb)"/><rect x="8.5" y="3.5" width="3.5" height="9.5" fill="#f8e020"/><circle cx="4.5" cy="6.5" r="2.2" fill="#b0b0b0"/><rect x="1.5" y="9" width="3.8" height="4.5" fill="#f0a010"/></svg>
<div class="t" style="left:1079.5px;top:219px;color:#333">Event Count</div>
<svg class="a" style="left:1062px;top:233px" width="14" height="14" viewBox="0 0 14 14"><defs><linearGradient id="gb" x1="0" y1="0" x2="0" y2="1"><stop offset="0" stop-color="#40c8f0"/><stop offset="1" stop-color="#2060c0"/></linearGradient></defs><rect x="1" y="0.5" width="12" height="13" rx="1" fill="#e0e0e0" stroke="#8090a0" stroke-width="0.8"/><rect x="1.5" y="1" width="11" height="2.5" fill="url(#gb)"/><rect x="8.5" y="3.5" width="3.5" height="9.5" fill="#f8e020"/><circle cx="4.5" cy="6.5" r="2.2" fill="#b0b0b0"/><rect x="1.5" y="9" width="3.8" height="4.5" fill="#f0a010"/></svg>
<div class="t" style="left:1079.5px;top:235.3px;color:#333">Priority</div>
<div class="a" style="left:901px;top:248px;width:320px;height:14px;background:#e9e9e9"></div>
<svg class="a" style="left:905.5px;top:249.685px" width="8" height="11" viewBox="0 0 8 11"><circle cx="4" cy="4" r="2.3" fill="none" stroke="#4a72c8" stroke-width="1.5"/><path d="M4 6.3V10.5" stroke="#4a72c8" stroke-width="1.6"/></svg>
<div class="t" style="left:917px;top:250.185px;color:#b0cce8;font-weight:bold;font-size:10.8px;letter-spacing:0.1px">Common</div>
<div class="a" style="left:916px;top:262px;width:305px;height:15px;background:#f8f8fc;border-bottom:1px solid #ececf2"></div>
<div class="a" style="left:1061px;top:262px;width:1px;height:15px;background:#ececf0"></div>
<div class="t" style="left:929.5px;top:264.555px;color:#333">Resource ID</div>
<div class="t" style="left:1062.5px;top:264.555px;color:#333;font-style:italic;color:#909090">CLbohqx8BABC5UrzqEQIYHA==</div>
<div class="a" style="left:916px;top:277px;width:305px;height:14px;background:#f8f8fc;border-bottom:1px solid #ececf2"></div>
<div class="a" style="left:1061px;top:277px;width:1px;height:14px;background:#ececf0"></div>
<div class="t" style="left:929.5px;top:278.925px;color:#333">External ID</div>
<div class="a" style="left:916px;top:291px;width:305px;height:14px;background:#f8f8fc;border-bottom:1px solid #ececf2"></div>
<div class="a" style="left:1061px;top:291px;width:1px;height:14px;background:#ececf0"></div>
<div class="t" style="left:929.5px;top:293.295px;color:#333">Alias</div>
<div class="a" style="left:916px;top:305px;width:305px;height:15px;background:#f8f8fc;border-bottom:1px solid #ececf2"></div>
<div class="a" style="left:1061px;top:305px;width:1px;height:15px;background:#ececf0"></div>
<div class="t" style="left:929.5px;top:307.665px;color:#333">Description</div>
<div class="a" style="left:916px;top:320px;width:305px;height:14px;background:#f8f8fc;border-bottom:1px solid #ececf2"></div>
<div class="a" style="left:1061px;top:320px;width:1px;height:14px;background:#ececf0"></div>
<div class="t" style="left:929.5px;top:322.035px;color:#333">Version ID</div>
<div class="a" style="left:916px;top:334px;width:305px;height:15px;background:#f8f8fc;border-bottom:1px solid #ececf2"></div>
<div class="a" style="left:1061px;top:334px;width:1px;height:15px;background:#ececf0"></div>
<div class="t" style="left:929.5px;top:336.40500000000003px;color:#333">Deprecated</div>
<svg class="a" style="left:1065px;top:336.40500000000003px" width="11" height="11" viewBox="0 0 11 11"><defs><linearGradient id="cg" x1="0" y1="0" x2="0" y2="1"><stop offset="0" stop-color="#fff"/><stop offset="1" stop-color="#d8e4f0"/></linearGradient></defs><rect x="0.5" y="0.5" width="10" height="10" fill="url(#cg)" stroke="#8aa0c0"/></svg>
<div class="a" style="left:901px;top:349px;width:320px;height:14px;background:#e9e9e9"></div>
<svg class="a" style="left:905.5px;top:350.27500000000003px" width="8" height="11" viewBox="0 0 8 11"><circle cx="4" cy="4" r="2.3" fill="none" stroke="#4a72c8" stroke-width="1.5"/><path d="M4 6.3V10.5" stroke="#4a72c8" stroke-width="1.6"/></svg>
<div class="t" style="left:917px;top:350.77500000000003px;color:#b0cce8;font-weight:bold;font-size:10.8px;letter-spacing:0.1px">Assign</div>
<div class="a" style="left:916px;top:363px;width:305px;height:14px;background:#f8f8fc;border-bottom:1px solid #ececf2"></div>
<div class="a" style="left:1061px;top:363px;width:1px;height:14px;background:#ececf0"></div>
<div class="t" style="left:929.5px;top:365.14500000000004px;color:#333">Owner</div>
<div class="a" style="left:916px;top:377px;width:305px;height:15px;background:#f8f8fc;border-bottom:1px solid #ececf2"></div>
<div class="a" style="left:1061px;top:377px;width:1px;height:15px;background:#ececf0"></div>
<div class="t" style="left:929.5px;top:379.51500000000004px;color:#333">Notification Groups</div>
<div class="a" style="left:901px;top:392px;width:320px;height:14px;background:#e9e9e9"></div>
<svg class="a" style="left:905.5px;top:393.38500000000005px" width="8" height="11" viewBox="0 0 8 11"><circle cx="4" cy="4" r="2.3" fill="none" stroke="#4a72c8" stroke-width="1.5"/><path d="M4 6.3V10.5" stroke="#4a72c8" stroke-width="1.6"/></svg>
<div class="t" style="left:917px;top:393.88500000000005px;color:#b0cce8;font-weight:bold;font-size:10.8px;letter-spacing:0.1px">Parent Groups</div>
<div class="a" style="left:916px;top:406px;width:305px;height:14px;background:#f8f8fc;border-bottom:1px solid #ececf2"></div>
<div class="a" style="left:1061px;top:406px;width:1px;height:14px;background:#ececf0"></div>
<div class="t" style="left:929.5px;top:408.25500000000005px;color:#2222cc">admin's Data Monitors</div>
<div class="t" style="left:1062.5px;top:408.25500000000005px;color:#333;font-style:italic;color:#909090">/All Data Monitors/Personal/admin...</div>
<div class="a" style="left:901px;top:420px;width:320px;height:15px;background:#e9e9e9"></div>
<svg class="a" style="left:905.5px;top:422.12500000000006px" width="8" height="11" viewBox="0 0 8 11"><circle cx="4" cy="4" r="2.3" fill="none" stroke="#4a72c8" stroke-width="1.5"/><path d="M4 6.3V10.5" stroke="#4a72c8" stroke-width="1.6"/></svg>
<div class="t" style="left:917px;top:422.62500000000006px;color:#b0cce8;font-weight:bold;font-size:10.8px;letter-spacing:0.1px">Creation Information</div>
<div class="a" style="left:916px;top:435px;width:305px;height:14px;background:#f8f8fc;border-bottom:1px solid #ececf2"></div>
<div class="a" style="left:1061px;top:435px;width:1px;height:14px;background:#ececf0"></div>
<div class="t" style="left:929.5px;top:436.99500000000006px;color:#2222cc">Created By</div>
<div class="t" style="left:1062.5px;top:436.99500000000006px;color:#333;font-style:italic;color:#909090">admin</div>
<div class="a" style="left:916px;top:449px;width:305px;height:15px;background:#f8f8fc;border-bottom:1px solid #ececf2"></div>
<div class="a" style="left:1061px;top:449px;width:1px;height:15px;background:#ececf0"></div>
<div class="t" style="left:929.5px;top:451.36500000000007px;color:#333">Creation Time</div>
<div class="t" style="left:1062.5px;top:451.36500000000007px;color:#333;font-style:italic;color:#909090">24 Feb 2009 17:52:08 PST</div>
<div class="a" style="left:916px;top:464px;width:305px;height:14px;background:#f8f8fc;border-bottom:1px solid #ececf2"></div>
<div class="a" style="left:1061px;top:464px;width:1px;height:14px;background:#ececf0"></div>
<div class="t" style="left:929.5px;top:465.73500000000007px;color:#333">Time Since Creation</div>
<div class="t" style="left:1062.5px;top:465.73500000000007px;color:#333;font-style:italic;color:#909090">22 hour(s) 47 min(s) 51 sec(s)</div>
<div class="a" style="left:901px;top:478px;width:320px;height:14px;background:#e9e9e9"></div>
<svg class="a" style="left:905.5px;top:479.6050000000001px" width="8" height="11" viewBox="0 0 8 11"><circle cx="4" cy="4" r="2.3" fill="none" stroke="#4a72c8" stroke-width="1.5"/><path d="M4 6.3V10.5" stroke="#4a72c8" stroke-width="1.6"/></svg>
<div class="t" style="left:917px;top:480.1050000000001px;color:#b0cce8;font-weight:bold;font-size:10.8px;letter-spacing:0.1px">Last Update Information</div>
<div class="a" style="left:916px;top:492px;width:305px;height:15px;background:#f8f8fc;border-bottom:1px solid #ececf2"></div>
<div class="a" style="left:1061px;top:492px;width:1px;height:15px;background:#ececf0"></div>
<div class="t" style="left:929.5px;top:494.4750000000001px;color:#2222cc">Last Updated By</div>
<div class="t" style="left:1062.5px;top:494.4750000000001px;color:#333;font-style:italic;color:#909090">admin</div>
<div class="a" style="left:916px;top:507px;width:305px;height:14px;background:#f8f8fc;border-bottom:1px solid #ececf2"></div>
<div class="a" style="left:1061px;top:507px;width:1px;height:14px;background:#ececf0"></div>
<div class="t" style="left:929.5px;top:508.845px;color:#333">Last Update Time</div>
<div class="t" style="left:1062.5px;top:508.845px;color:#333;font-style:italic;color:#909090">25 Feb 2009 16:39:59 PST</div>
<div class="a" style="left:916px;top:521px;width:305px;height:14px;background:#f8f8fc;border-bottom:1px solid #ececf2"></div>
<div class="a" style="left:1061px;top:521px;width:1px;height:14px;background:#ececf0"></div>
<div class="t" style="left:929.5px;top:523.2150000000001px;color:#333">Time Since Last Update</div>
<svg class="a" style="left:920px;top:113px" width="7" height="7" viewBox="0 0 7 7"><path d="M3.5 0V7M0.3 1.7L6.7 5.3M6.7 1.7L0.3 5.3" stroke="#c82828" stroke-width="1.6"/></svg>
<div class="a" style="left:900px;top:709px;width:322px;height:34px;background:#ececec;border:1px solid #a8c0e0;border-left:2px solid #98b4e0"></div>
<div class="t" style="left:902.5px;top:715.5px;font-weight:bold;color:#222;font-size:10.5px;letter-spacing:0">Source Node Identifier</div>
<div class="t" style="left:902.5px;top:728.3px;color:#333">Source Node Identifier</div>
<div class="a" style="left:1022px;top:749px;width:37px;height:21px;background:linear-gradient(#fafcfe,#e4ecf6 50%,#c8d8ee);border:1px solid #8a9ab8;border-radius:1px"></div>
<div class="t" style="left:1022px;top:754px;width:37px;text-align:center;color:#333"><u>O</u>K</div>
<div class="a" style="left:1064px;top:749px;width:54px;height:21px;background:linear-gradient(#fafcfe,#e4ecf6 50%,#c8d8ee);border:1px solid #8a9ab8;border-radius:1px"></div>
<div class="t" style="left:1064px;top:754px;width:54px;text-align:center;color:#333"><u>C</u>ancel</div>
<div class="a" style="left:1123px;top:749px;width:49px;height:21px;background:linear-gradient(#fafcfe,#e4ecf6 50%,#c8d8ee);border:1px solid #8a9ab8;border-radius:1px"></div>
<div class="t" style="left:1123px;top:754px;width:49px;text-align:center;color:#333"><u>A</u>pply</div>
<div class="a" style="left:1177px;top:749px;width:43px;height:21px;background:linear-gradient(#fafcfe,#e4ecf6 50%,#c8d8ee);border:1px solid #8a9ab8;border-radius:1px"></div>
<div class="t" style="left:1177px;top:754px;width:43px;text-align:center;color:#333"><u>H</u>elp</div>
<div class="a" style="left:897px;top:775px;width:330px;height:2px;background:#a8c0e0"></div>
<div class="a" style="left:326px;top:775px;width:569px;height:2px;background:#a8c0e0"></div>
<div class="a" style="left:0px;top:775px;width:326px;height:2px;background:#b8c8e0"></div>
</body></html>
